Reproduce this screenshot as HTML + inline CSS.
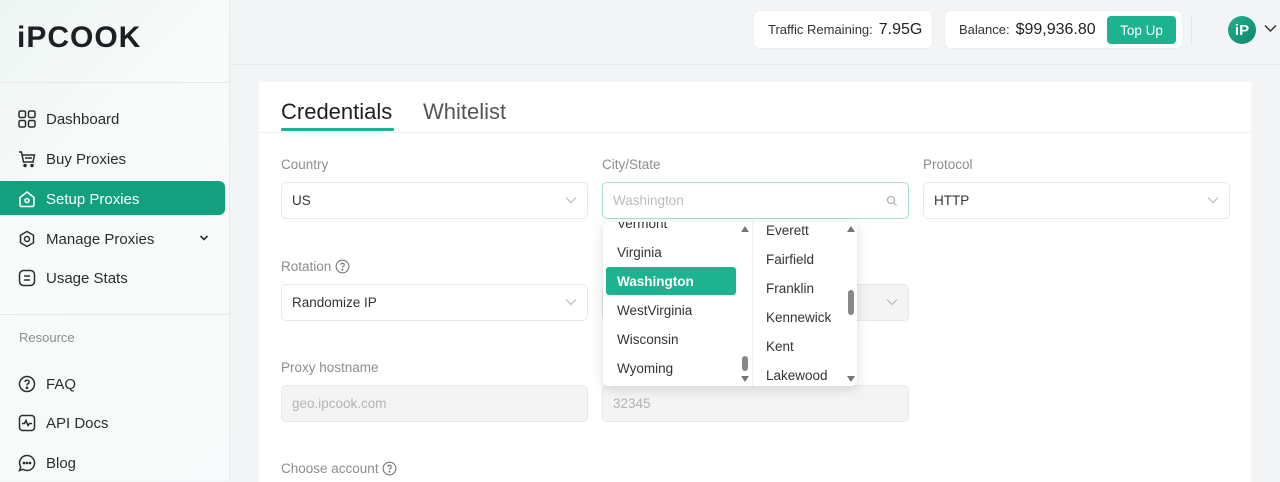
<!DOCTYPE html>
<html><head><meta charset="utf-8"><style>
*{box-sizing:border-box;margin:0;padding:0}
body{width:1280px;height:481px;overflow:hidden;font-family:"Liberation Sans",sans-serif;background:#f3f4f6;position:relative;color:#222}
.abs{position:absolute}
.side{left:0;top:0;width:230px;height:481px;background:linear-gradient(135deg,#eef6f2 0%,#f9fbfa 40%,#f7f9fa 100%);border-right:1px solid #e6e8ea}
.logo{left:17px;top:21px;font-size:30px;font-weight:bold;color:#1c1f23;letter-spacing:1px}
.hr{height:1px;background:#e6e8ea}
.mi{left:18px;font-size:15px;color:#2a2d31;display:flex;align-items:center;height:20px}
.mi svg{margin-right:10px}
.active{left:0;top:181px;width:225px;height:34px;background:#13a07f;border-radius:0 6px 6px 0}
.top{height:65px;left:230px;top:0;width:1050px;border-bottom:1px solid #e7e9eb}
.box{background:#fff;border-radius:6px;border:1px solid #eceef0;top:10px;height:39px;display:flex;align-items:center;font-size:13px;color:#333}
.card{left:259px;top:82px;width:992px;height:400px;background:#fff}
.lbl{font-size:13.5px;color:#8a8d91}
.inp{height:37px;width:307px;border:1px solid #e6e8ea;border-radius:5px;font-size:13.5px;color:#333;padding-left:10px;display:flex;align-items:center}
.dis{background:#f4f4f4;color:#b3b3b3}
.chev{position:absolute;right:10px;top:13px}
.dd{left:603px;top:222px;width:254px;height:164px;background:#fff;border-radius:6px;box-shadow:0 3px 12px rgba(0,0,0,.14);overflow:hidden}
.it{position:absolute;font-size:13.5px;color:#333}
</style></head><body>
<div class="abs side"></div>
<div class="abs logo">iPCOOK</div>
<div class="abs hr" style="left:0;top:82px;width:229px"></div>
<div class="abs active"></div>
<div class="abs mi" style="top:109px"><svg width="18" height="18" viewBox="0 0 18 18" fill="none" stroke="#2a2d31" stroke-width="1.5"><rect x="1" y="1" width="6.5" height="6.5" rx="1.5"/><rect x="10.5" y="1" width="6.5" height="6.5" rx="1.5"/><rect x="1" y="10.5" width="6.5" height="6.5" rx="1.5"/><rect x="10.5" y="10.5" width="6.5" height="6.5" rx="1.5"/></svg>Dashboard</div>
<div class="abs mi" style="top:149px"><svg width="18" height="18" viewBox="0 0 18 18" fill="none" stroke="#2a2d31" stroke-width="1.5"><path d="M1 2h2.5l2 10h9.5l1.5-7H4.5M7 8h7"/><circle cx="7" cy="15.5" r="1" fill="#2a2d31"/><circle cx="14" cy="15.5" r="1" fill="#2a2d31"/></svg>Buy Proxies</div>
<div class="abs mi" style="top:189px;color:#fff"><svg width="18" height="18" viewBox="0 0 18 18" fill="none" stroke="#fff" stroke-width="1.5"><path d="M2 7.5L9 2l7 5.5V15a1.5 1.5 0 0 1-1.5 1.5h-11A1.5 1.5 0 0 1 2 15z"/><circle cx="9" cy="10.5" r="2"/></svg>Setup Proxies</div>
<div class="abs mi" style="top:229px"><svg width="18" height="18" viewBox="0 0 18 18" fill="none" stroke="#2a2d31" stroke-width="1.5"><path d="M9 1.5l6.5 3.75v7.5L9 16.5l-6.5-3.75v-7.5z"/><circle cx="9" cy="9" r="2.5"/></svg>Manage Proxies</div>
<svg class="abs" style="left:199px;top:234px" width="10" height="8" viewBox="0 0 10 8"><path d="M1.5 2l3.5 3.5L8.5 2" fill="none" stroke="#2a2d31" stroke-width="1.6"/></svg>
<div class="abs mi" style="top:268px"><svg width="18" height="18" viewBox="0 0 18 18" fill="none" stroke="#2a2d31" stroke-width="1.5"><rect x="1.5" y="1.5" width="15" height="15" rx="4"/><path d="M6 7h6M6 11h6"/></svg>Usage Stats</div>
<div class="abs hr" style="left:0;top:314px;width:229px"></div>
<div class="abs" style="left:19px;top:330px;font-size:13px;color:#8a8d91">Resource</div>
<div class="abs mi" style="top:374px"><svg width="18" height="18" viewBox="0 0 18 18" fill="none" stroke="#2a2d31" stroke-width="1.5"><circle cx="9" cy="9" r="7.5"/><path d="M7 7a2 2 0 1 1 2.5 2c-.5.2-.5.6-.5 1.3"/><circle cx="9" cy="12.8" r=".6" fill="#2a2d31"/></svg>FAQ</div>
<div class="abs mi" style="top:413px"><svg width="18" height="18" viewBox="0 0 18 18" fill="none" stroke="#2a2d31" stroke-width="1.5"><rect x="1.5" y="1.5" width="15" height="15" rx="3"/><path d="M4 9.5h2.5l1.5-3 2 5 1.5-2H14"/></svg>API Docs</div>
<div class="abs mi" style="top:453px"><svg width="18" height="18" viewBox="0 0 18 18" fill="none" stroke="#2a2d31" stroke-width="1.5"><path d="M9 1.5a7.5 7.5 0 1 1-4 13.8L1.5 16.5l1.2-3.5A7.5 7.5 0 0 1 9 1.5z"/><circle cx="6" cy="9" r=".6" fill="#2a2d31"/><circle cx="9" cy="9" r=".6" fill="#2a2d31"/><circle cx="12" cy="9" r=".6" fill="#2a2d31"/></svg>Blog</div>

<div class="abs top"></div>
<div class="abs box" style="left:753px;width:180px;padding-left:14px">Traffic Remaining:<span style="font-size:16px;margin-left:6px;color:#222">7.95G</span></div>
<div class="abs box" style="left:944px;width:239px;padding-left:14px">Balance:<span style="font-size:16px;margin-left:6px;color:#222">$99,936.80</span>
<div style="position:absolute;left:162px;top:5px;width:69px;height:28px;background:#1db391;border-radius:4px;color:#fff;font-size:13.5px;display:flex;align-items:center;justify-content:center">Top Up</div></div>
<div class="abs" style="left:1191px;top:15px;width:1px;height:30px;background:#e4e6e8"></div>
<div class="abs" style="left:1228px;top:16px;width:28px;height:28px;border-radius:50%;background:linear-gradient(135deg,#1db391,#10856a);color:#fff;font-weight:bold;font-size:15px;display:flex;align-items:center;justify-content:center">iP</div>
<svg class="abs" style="left:1264px;top:24px" width="13" height="9" viewBox="0 0 13 9"><path d="M1 1.5l5.5 5.5L12 1.5" fill="none" stroke="#333" stroke-width="1.5"/></svg>

<div class="abs card"></div>
<div class="abs" style="left:281px;top:99px;font-size:22px;color:#1c1f23">Credentials</div>
<div class="abs" style="left:423px;top:99px;font-size:22px;color:#555">Whitelist</div>
<div class="abs hr" style="left:259px;top:132px;width:992px;background:#eef0f2"></div>
<div class="abs" style="left:281px;top:128px;width:113px;height:3px;background:#1db391;border-radius:1px"></div>

<div class="abs lbl" style="left:281px;top:157px">Country</div>
<div class="abs lbl" style="left:602px;top:157px">City/State</div>
<div class="abs lbl" style="left:923px;top:157px">Protocol</div>
<div class="abs inp" style="left:281px;top:182px">US<svg class="chev" width="12" height="8" viewBox="0 0 12 8"><path d="M1 1.5l5 5 5-5" fill="none" stroke="#bbb" stroke-width="1.2"/></svg></div>
<div class="abs inp" style="left:602px;top:182px;border-color:#a8dcd7;color:#bcbcbc">Washington<svg class="chev" style="top:12px" width="12" height="12" viewBox="0 0 12 12"><circle cx="5" cy="5" r="3.5" fill="none" stroke="#aaa" stroke-width="1.1"/><path d="M7.5 7.5l3 3" stroke="#aaa" stroke-width="1.1"/></svg></div>
<div class="abs inp" style="left:923px;top:182px">HTTP<svg class="chev" width="12" height="8" viewBox="0 0 12 8"><path d="M1 1.5l5 5 5-5" fill="none" stroke="#bbb" stroke-width="1.2"/></svg></div>

<div class="abs lbl" style="left:281px;top:259px">Rotation <svg style="vertical-align:-3px" width="15" height="15" viewBox="0 0 16 16" fill="none" stroke="#777" stroke-width="1.2"><circle cx="8" cy="8" r="6.8"/><path d="M6.2 6.3a1.8 1.8 0 1 1 2.3 1.7c-.4.2-.5.5-.5 1.2"/><circle cx="8" cy="11.3" r=".5" fill="#777"/></svg></div>
<div class="abs inp" style="left:281px;top:284px">Randomize IP<svg class="chev" width="12" height="8" viewBox="0 0 12 8"><path d="M1 1.5l5 5 5-5" fill="none" stroke="#bbb" stroke-width="1.2"/></svg></div>
<div class="abs inp dis" style="left:602px;top:284px"><svg class="chev" width="12" height="8" viewBox="0 0 12 8"><path d="M1 1.5l5 5 5-5" fill="none" stroke="#bbb" stroke-width="1.2"/></svg></div>

<div class="abs lbl" style="left:281px;top:360px">Proxy hostname</div>
<div class="abs inp dis" style="left:281px;top:385px">geo.ipcook.com</div>
<div class="abs inp dis" style="left:602px;top:385px">32345</div>

<div class="abs lbl" style="left:281px;top:461px">Choose account <svg style="vertical-align:-3px" width="15" height="15" viewBox="0 0 16 16" fill="none" stroke="#777" stroke-width="1.2"><circle cx="8" cy="8" r="6.8"/><path d="M6.2 6.3a1.8 1.8 0 1 1 2.3 1.7c-.4.2-.5.5-.5 1.2"/><circle cx="8" cy="11.3" r=".5" fill="#777"/></svg></div>

<div class="abs dd">
<div style="position:absolute;left:149px;top:0;width:1px;height:164px;background:#eee"></div>
<div class="it" style="left:14px;top:-6px">Vermont</div>
<div class="it" style="left:14px;top:23px">Virginia</div>
<div style="position:absolute;left:3px;top:45px;width:130px;height:28px;background:#1db391;border-radius:3px"></div>
<div class="it" style="left:14px;top:52px;color:#fff;font-weight:bold">Washington</div>
<div class="it" style="left:14px;top:81px">WestVirginia</div>
<div class="it" style="left:14px;top:110px">Wisconsin</div>
<div class="it" style="left:14px;top:139px">Wyoming</div>
<div class="it" style="left:163px;top:1px">Everett</div>
<div class="it" style="left:163px;top:30px">Fairfield</div>
<div class="it" style="left:163px;top:59px">Franklin</div>
<div class="it" style="left:163px;top:88px">Kennewick</div>
<div class="it" style="left:163px;top:117px">Kent</div>
<div class="it" style="left:163px;top:146px">Lakewood</div>
<div style="position:absolute;left:138px;top:4px;width:0;height:0;border-left:4px solid transparent;border-right:4px solid transparent;border-bottom:6px solid #777"></div>
<div style="position:absolute;left:138px;top:154px;border-left:4px solid transparent;border-right:4px solid transparent;border-top:6px solid #777"></div>
<div style="position:absolute;left:139px;top:134px;width:6px;height:15px;background:#888;border-radius:3px"></div>
<div style="position:absolute;left:244px;top:4px;border-left:4px solid transparent;border-right:4px solid transparent;border-bottom:6px solid #777"></div>
<div style="position:absolute;left:244px;top:154px;border-left:4px solid transparent;border-right:4px solid transparent;border-top:6px solid #777"></div>
<div style="position:absolute;left:245px;top:68px;width:6px;height:25px;background:#888;border-radius:3px"></div>
</div>
</body></html>
